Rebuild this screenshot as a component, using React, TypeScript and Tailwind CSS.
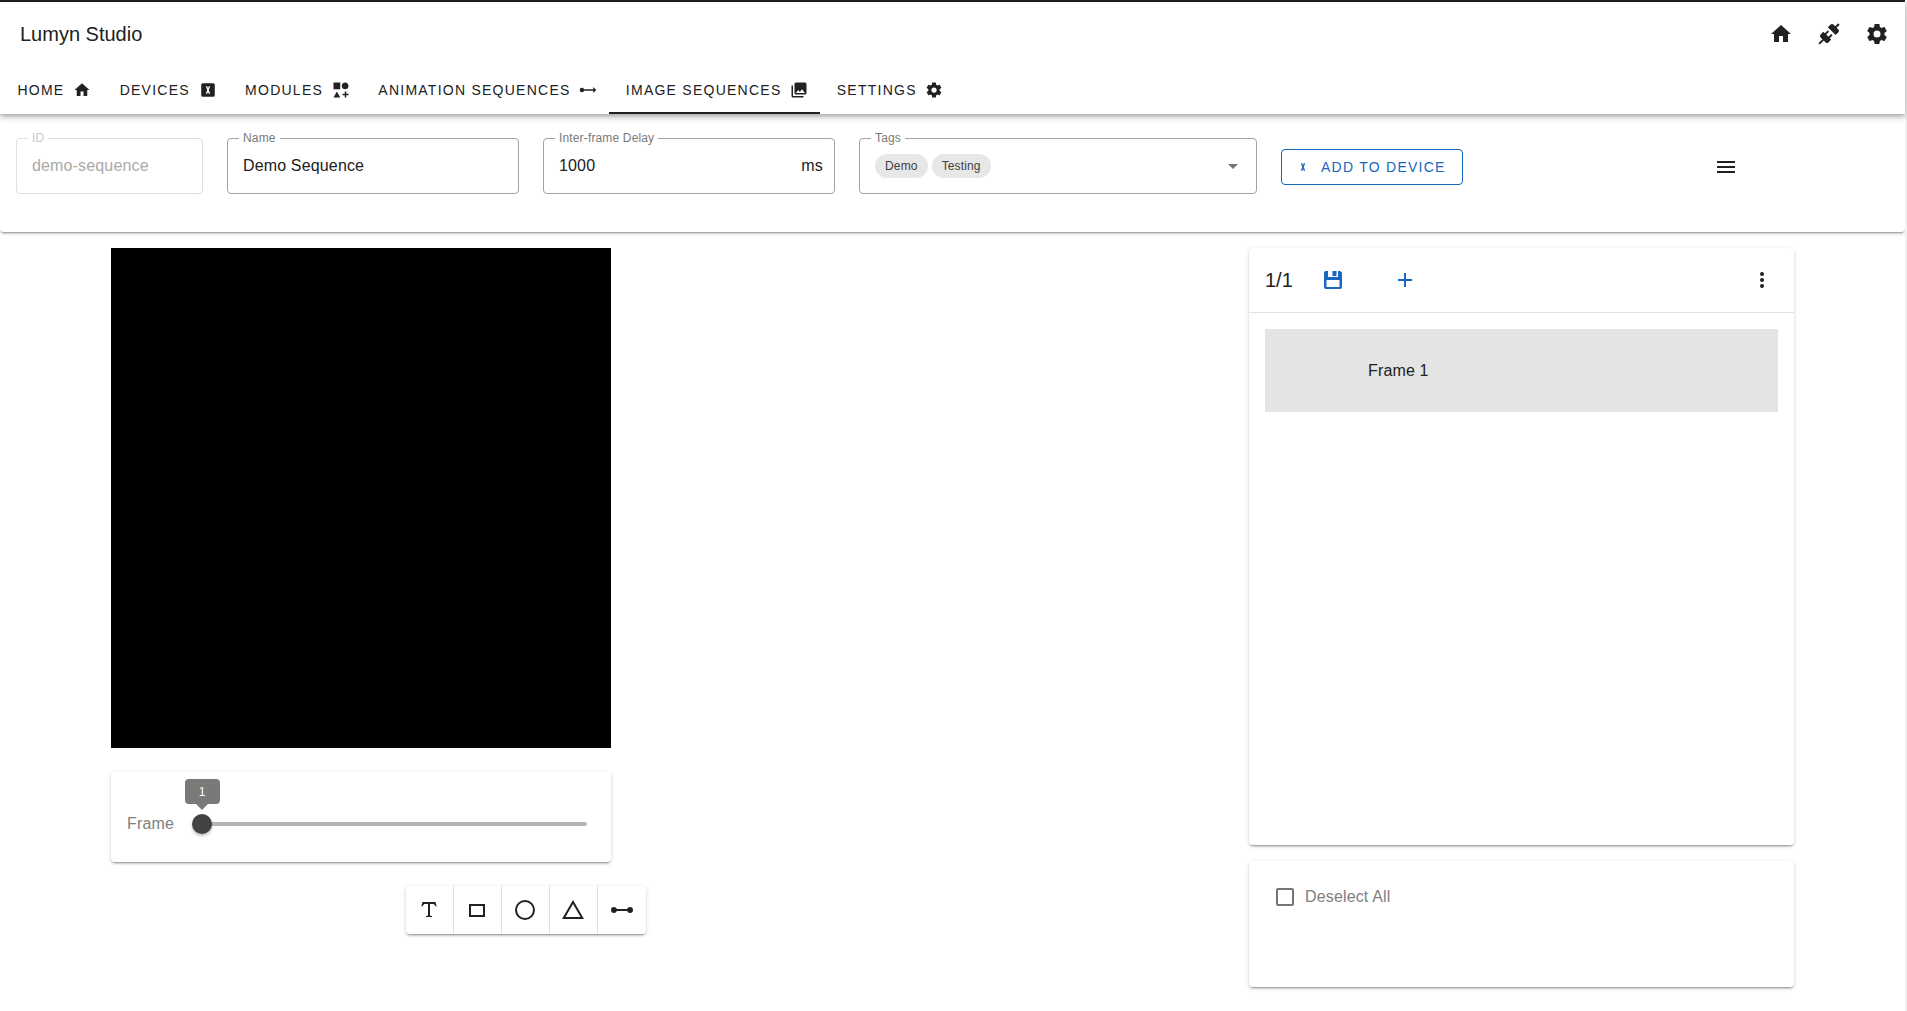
import React from "react";

const PATHS = {
  home: "M10,20V14H14V20H19V12H22L12,3L2,12H5V20H10Z",
  connection:
    "M21.4 7.5C22.2 8.3 22.2 9.6 21.4 10.3L18.6 13.1L10.8 5.3L13.6 2.5C14.4 1.7 15.7 1.7 16.4 2.5L18.2 4.3L21.2 1.3L22.6 2.7L19.6 5.7L21.4 7.5M15.6 13.3L14.2 11.9L11.4 14.7L9.3 12.6L12.1 9.8L10.7 8.4L7.9 11.2L6.4 9.8L3.6 12.6C2.8 13.4 2.8 14.7 3.6 15.4L5.4 17.2L1.4 21.2L2.8 22.6L6.8 18.6L8.6 20.4C9.4 21.2 10.7 21.2 11.4 20.4L14.2 17.6L12.8 16.2L15.6 13.3Z",
  cog: "M12,15.5A3.5,3.5 0 0,1 8.5,12A3.5,3.5 0 0,1 12,8.5A3.5,3.5 0 0,1 15.5,12A3.5,3.5 0 0,1 12,15.5M19.43,12.97C19.47,12.65 19.5,12.33 19.5,12C19.5,11.67 19.47,11.34 19.43,11L21.54,9.37C21.73,9.22 21.78,8.95 21.66,8.73L19.66,5.27C19.54,5.05 19.27,4.96 19.05,5.05L16.56,6.05C16.04,5.66 15.5,5.32 14.87,5.07L14.5,2.42C14.46,2.18 14.25,2 14,2H10C9.75,2 9.54,2.18 9.5,2.42L9.13,5.07C8.5,5.32 7.96,5.66 7.44,6.05L4.95,5.05C4.73,4.96 4.46,5.05 4.34,5.27L2.34,8.73C2.21,8.95 2.27,9.22 2.46,9.37L4.57,11C4.53,11.34 4.5,11.67 4.5,12C4.5,12.33 4.53,12.65 4.57,12.97L2.46,14.63C2.27,14.78 2.21,15.05 2.34,15.27L4.34,18.73C4.46,18.95 4.73,19.03 4.95,18.95L7.44,17.94C7.96,18.34 8.5,18.68 9.13,18.93L9.5,21.58C9.54,21.82 9.75,22 10,22H14C14.25,22 14.46,21.82 14.5,21.58L14.87,18.93C15.5,18.67 16.04,18.34 16.56,17.94L19.05,18.95C19.27,19.03 19.54,18.95 19.66,18.73L21.66,15.27C21.78,15.05 21.73,14.78 21.54,14.63L19.43,12.97Z",
  deviceBox:
    "M5,3H19A2,2 0 0,1 21,5V19A2,2 0 0,1 19,21H5A2,2 0 0,1 3,19V5A2,2 0 0,1 5,3M9,7L11,12L9,17H11L12,14.5L13,17H15L13,12L15,7H13L12,9.5L11,7H9Z",
  device: "M9,7L11,12L9,17H11L12,14.5L13,17H15L13,12L15,7H13L12,9.5L11,7H9Z",
  shapes:
    "M2,2H11V11H2V2M17.5,2C20,2 22,4 22,6.5C22,9 20,11 17.5,11C15,11 13,9 13,6.5C13,4 15,2 17.5,2M6.5,14L11,22H2L6.5,14M19,17H22V19H19V22H17V19H14V17H17V14H19V17Z",
  rayArrow:
    "M23,12L19,16V13H6.83C6.42,14.17 5.31,15 4,15A3,3 0 0,1 1,12A3,3 0 0,1 4,9C5.31,9 6.42,9.83 6.83,11H19V8L23,12Z",
  images:
    "M22,16V4A2,2 0 0,0 20,2H8A2,2 0 0,0 6,4V16A2,2 0 0,0 8,18H20A2,2 0 0,0 22,16M11,12L13.03,14.71L16,11L20,16H8M2,6V20A2,2 0 0,0 4,22H18V20H4V6",
  menu: "M3,6H21V8H3V6M3,11H21V13H3V11M3,16H21V18H3V16Z",
  menuDown: "M7,10L12,15L17,10H7Z",
  text: "M18.5,4L19.66,8.35L18.7,8.61C18.25,7.74 17.79,6.87 17.26,6.43C16.73,6 16.11,6 15.5,6H13V16.5C13,17 13,17.5 13.33,17.75C13.67,18 14.33,18 15,18V19H9V18C9.67,18 10.33,18 10.67,17.75C11,17.5 11,17 11,16.5V6H8.5C7.89,6 7.27,6 6.74,6.43C6.21,6.87 5.75,7.74 5.3,8.61L4.34,8.35L5.5,4H18.5Z",
  rect: "M4,6V19H20V6H4M18,17H6V8H18V17Z",
  circle:
    "M12,20A8,8 0 0,1 4,12A8,8 0 0,1 12,4A8,8 0 0,1 20,12A8,8 0 0,1 12,20M12,2A10,10 0 0,0 2,12A10,10 0 0,0 12,22A10,10 0 0,0 22,12A10,10 0 0,0 12,2Z",
  triangle: "M12,2L1,21H23M12,6L19.53,19H4.47",
  line: "M4,9C5.31,9 6.42,9.83 6.83,11H17.17C17.58,9.83 18.69,9 20,9A3,3 0 0,1 23,12A3,3 0 0,1 20,15C18.69,15 17.58,14.17 17.17,13H6.83C6.42,14.17 5.31,15 4,15A3,3 0 0,1 1,12A3,3 0 0,1 4,9Z",
  save: "M5,3H7V9H17V3H19L21,4.5V19A2,2 0 0,1 19,21H5A2,2 0 0,1 3,19V5A2,2 0 0,1 5,3M11.5,3H15.5V8H11.5V3M5.5,12V19H18.5V12H5.5Z",
  plus: "M19,13H13V19H11V13H5V11H11V5H13V11H19V13Z",
  dots: "M12,16A2,2 0 0,1 14,18A2,2 0 0,1 12,20A2,2 0 0,1 10,18A2,2 0 0,1 12,16M12,10A2,2 0 0,1 14,12A2,2 0 0,1 12,14A2,2 0 0,1 10,12A2,2 0 0,1 12,10M12,4A2,2 0 0,1 14,6A2,2 0 0,1 12,8A2,2 0 0,1 10,6A2,2 0 0,1 12,4Z",
  checkbox:
    "M19,3H5C3.89,3 3,3.89 3,5V19A2,2 0 0,0 5,21H19A2,2 0 0,0 21,19V5C21,3.89 20.1,3 19,3M19,5V19H5V5H19Z",
};

type IconName = keyof typeof PATHS;

function Icon({ name, className = "size-6" }: { name: IconName; className?: string }) {
  return (
    <svg viewBox="0 0 24 24" fill="currentColor" fillRule="evenodd" className={`shrink-0 ${className}`} aria-hidden>
      <path d={PATHS[name]} />
    </svg>
  );
}

const CARD =
  "rounded bg-white shadow-[0_3px_1px_-2px_rgba(0,0,0,0.2),0_2px_2px_0_rgba(0,0,0,0.14),0_1px_5px_0_rgba(0,0,0,0.12)]";

const TABS: { label: string; icon: IconName; active?: boolean }[] = [
  { label: "Home", icon: "home" },
  { label: "Devices", icon: "deviceBox" },
  { label: "Modules", icon: "shapes" },
  { label: "Animation Sequences", icon: "rayArrow" },
  { label: "Image Sequences", icon: "images", active: true },
  { label: "Settings", icon: "cog" },
];

const TOOLS: IconName[] = ["text", "rect", "circle", "triangle", "line"];

function Field({
  label,
  width,
  disabled = false,
  children,
}: {
  label: string;
  width: string;
  disabled?: boolean;
  children: React.ReactNode;
}) {
  return (
    <div
      className={`relative flex h-14 shrink-0 items-center rounded border pl-[15px] tracking-[0.15px] ${width} ${
        disabled ? "border-[#dfdfdf] text-[#a9a9a9]" : "border-[#a3a3a3] text-[#212121]"
      }`}
    >
      <span
        className={`absolute -top-[9px] left-[11px] bg-white px-1 text-xs leading-4 ${
          disabled ? "text-[#cccccc]" : "text-[#7a7a7a]"
        }`}
      >
        {label}
      </span>
      {children}
    </div>
  );
}

function Header() {
  return (
    <header className="relative z-10 bg-white shadow-[0_2px_4px_-1px_rgba(0,0,0,0.2),0_4px_5px_0_rgba(0,0,0,0.14),0_1px_10px_0_rgba(0,0,0,0.12)]">
      <div className="flex h-16 items-center justify-between pl-5 pr-4">
        <h1 className="text-xl">Lumyn Studio</h1>
        <div className="flex gap-6">
          <Icon name="home" />
          <Icon name="connection" />
          <Icon name="cog" />
        </div>
      </div>
      <nav className="flex h-12 pl-[0.6px]">
        {TABS.map((tab) => (
          <button
            key={tab.label}
            className={`flex items-center gap-[8.7px] border-b-2 pl-[16.8px] pr-[11.75px] pt-0.5 text-sm uppercase tracking-[1.25px] ${
              tab.active ? "border-[#212121]" : "border-transparent"
            }`}
          >
            {tab.label}
            <Icon name={tab.icon} className="size-[18px]" />
          </button>
        ))}
      </nav>
    </header>
  );
}

function SequenceBar() {
  return (
    <section className={`flex h-[117.5px] items-start gap-6 pl-4 pt-6 ${CARD}`}>
      <Field label="ID" width="w-[187px]" disabled>
        demo-sequence
      </Field>
      <Field label="Name" width="w-[292px]">
        Demo Sequence
      </Field>
      <Field label="Inter-frame Delay" width="w-[292px]">
        <span className="flex-1">1000</span>
        <span className="mr-[11px]">ms</span>
      </Field>
      <Field label="Tags" width="w-[398px]">
        <div className="flex flex-1 gap-1 text-xs tracking-[0.15px] text-[#414141]">
          <span className="flex h-6 items-center rounded-full bg-[#e7e7e7] px-2.5">Demo</span>
          <span className="flex h-6 items-center rounded-full bg-[#e7e7e7] px-2.5">Testing</span>
        </div>
        <Icon name="menuDown" className="mr-[11px] size-6 text-[#757575]" />
      </Field>
      <button className="mt-[11px] flex h-9 w-[182px] items-center gap-[9px] whitespace-nowrap rounded border border-[#1867c0] pl-3 text-sm uppercase tracking-[1.25px] text-[#1867c0]">
        <Icon name="device" className="size-[18px]" />
        Add to device
      </button>
      <Icon name="menu" className="ml-[227px] mt-[17px] size-6" />
    </section>
  );
}

function FrameSlider() {
  return (
    <div className={`mt-6 flex h-[90px] items-center pl-4 pr-6 pt-3.5 text-[#808080] ${CARD}`}>
      <span className="w-[75px] tracking-[0.15px]">Frame</span>
      <div className="relative h-1 flex-1 rounded-full bg-[#b6b6b6]">
        <span className="absolute -left-2.5 -top-2 size-5 rounded-full bg-[#424242] shadow-[0_2px_3px_rgba(0,0,0,0.25)]" />
        <span className="absolute -left-[17.5px] -top-[43px] flex h-[25px] w-[35.4px] items-center justify-center rounded bg-[#797979] text-xs text-white">
          1
        </span>
        <span className="absolute -left-1.5 -top-[18px] border-x-6 border-t-6 border-x-transparent border-t-[#797979]" />
      </div>
    </div>
  );
}

function Toolbar() {
  return (
    <div className={`ml-[295px] mt-6 flex h-12 w-60 ${CARD}`}>
      {TOOLS.map((tool) => (
        <button
          key={tool}
          className="flex w-12 items-center border-r border-[#dedede] pl-[11px] last:border-r-0 last:pl-3"
        >
          <Icon name={tool} />
        </button>
      ))}
    </div>
  );
}

function FramesPanel() {
  return (
    <div className={`h-[597px] ${CARD}`}>
      <div className="flex h-[65px] items-center border-b border-[#e1e1e1] pl-4 pr-5">
        <span className="w-14 text-xl">1/1</span>
        <Icon name="save" className="size-6 text-[#1867c0]" />
        <Icon name="plus" className="ml-12 size-6 text-[#1867c0]" />
        <Icon name="dots" className="ml-auto size-6" />
      </div>
      <div className="mx-4 mt-4 flex h-[83px] items-center bg-[#e4e4e4] pl-[103px]">
        <span className="tracking-[0.15px]">Frame 1</span>
      </div>
    </div>
  );
}

export default function App() {
  return (
    <div className="flex h-[1011px] w-[1907px] overflow-hidden bg-white font-['Liberation_Sans',Arial,sans-serif] text-base leading-6 text-[#212121]">
      <div className="w-[1905px]">
        <div className="h-0.5 bg-[#231f23]" />
        <Header />
        <SequenceBar />
        <main className="flex items-start justify-between pl-[111px] pr-[111px] pt-[16.5px]">
          <div className="w-[500px]">
            <div className="size-[500px] bg-black" />
            <FrameSlider />
            <Toolbar />
          </div>
          <aside className="w-[545px]">
            <FramesPanel />
            <div className={`mt-4 h-[126px] pl-6 pt-6 ${CARD}`}>
              <label className="flex items-center gap-2 text-[#808080]">
                <Icon name="checkbox" className="size-6 text-[#757575]" />
                <span className="tracking-[0.15px]">Deselect All</span>
              </label>
            </div>
          </aside>
        </main>
      </div>
      <div className="mt-0.5 w-0.5 bg-[#f1f1f1]" />
    </div>
  );
}
